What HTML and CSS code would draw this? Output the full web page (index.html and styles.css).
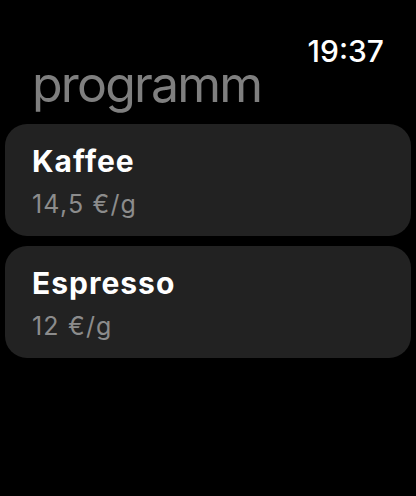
FILE: index.html
```html
<!DOCTYPE html>
<html lang="de">

<head>
    <meta charset="UTF-8">
    <meta name="viewport" content="width=device-width, initial-scale=1.0">
    <link rel="stylesheet" href="styles.css">
    <title>programm</title>
</head>

<body>
    <div class="watch">
        <div class="status-bar">
            <span class="clock">19:37</span>
        </div>
        <h1 class="page-title">programm</h1>
        <ul class="program-list">
            <li class="program-card">
                <span class="program-name">Kaffee</span>
                <span class="program-price">14,5 €/g</span>
            </li>
            <li class="program-card">
                <span class="program-name">Espresso</span>
                <span class="program-price">12 €/g</span>
            </li>
        </ul>
    </div>
</body>

</html>
```

FILE: styles.css
```css
html,
body {
    margin: 0;
    background: #000;
}

.watch {
    width: 416px;
    height: 496px;
    font-family: Inter, "Noto Sans", sans-serif;
    color: #fff;
    overflow: hidden;
}

.status-bar {
    display: flex;
    justify-content: flex-end;
    padding: 36px 32px 0 0;
}

.clock {
    font-size: 30px;
    font-weight: 500;
    line-height: 30px;
}

.page-title {
    margin: -7px 0 0 32px;
    font-size: 50px;
    font-weight: 400;
    line-height: 50px;
    letter-spacing: -1.8px;
    color: #7f7f7f;
}

.program-list {
    list-style: none;
    margin: 15px 5px 0;
    padding: 0;
    display: flex;
    flex-direction: column;
    gap: 10px;
}

.program-card {
    display: flex;
    flex-direction: column;
    gap: 16px;
    height: 112px;
    box-sizing: border-box;
    padding: 22px 0 0 27px;
    border-radius: 22px;
    background-color: #222;
}

.program-name {
    font-size: 30px;
    font-weight: 700;
    line-height: 30px;
    letter-spacing: 1px;
}

.program-price {
    font-size: 25px;
    line-height: 25px;
    letter-spacing: 1.2px;
    color: #8c8c8c;
}
```
